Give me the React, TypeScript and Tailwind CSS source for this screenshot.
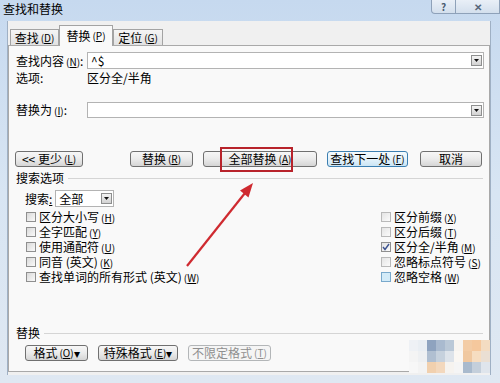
import type { ReactNode } from "react";

const Mn = ({ k }: { k: string }) => (
  <span className="ml-[2px] text-[10px]">
    (<span className="underline">{k}</span>)
  </span>
);

const DropBtn = () => (
  <div className="flex h-[11px] w-[11px] items-center justify-center border border-[#8e8f8f] bg-gradient-to-b from-[#f4f4f4] to-[#d2d2d2]">
    <svg width="5" height="3" viewBox="0 0 5 3">
      <path d="M0 0h5L2.5 3z" fill="#111" />
    </svg>
  </div>
);

type BtnProps = { children: ReactNode; className?: string; primary?: boolean; disabled?: boolean };

const Btn = ({ children, className = "", primary, disabled }: BtnProps) => {
  let skin = "border-[#707070] bg-gradient-to-b from-[#f7f7f7] via-[#ebebeb] to-[#d5d5d5] text-black";
  if (primary) skin = "border-[#3c7fb1] bg-gradient-to-b from-[#f5fbfe] via-[#e5f3fb] to-[#cbe5f5] text-black";
  if (disabled) skin = "border-[#b3b6b8] bg-[#f5f5f5] text-[#8f8f8f]";
  return (
    <div className={`flex h-[16px] items-center justify-center rounded-[3px] border leading-none ${skin} ${className}`}>
      {children}
    </div>
  );
};

type CheckProps = { children: ReactNode; tone?: "dim" | "on" | "hover" };

const Check = ({ children, tone }: CheckProps) => {
  let box = "border-[#8f8f8f] bg-gradient-to-br from-[#d9d9d9] to-[#fafafa]";
  if (tone === "dim") box = "border-[#b9b9b9] bg-gradient-to-br from-[#e4e4e4] to-[#fbfbfb]";
  if (tone === "on") box = "border-[#8f8f8f] bg-gradient-to-br from-[#e2e2e2] to-[#fbfbfb]";
  if (tone === "hover") box = "border-[#79a9cc] bg-[#d3ebf8]";
  return (
    <div className="flex h-[15px] items-center gap-[3px]">
      <div className={`flex h-[10px] w-[10px] items-center justify-center border ${box}`}>
        {tone === "on" && (
          <svg width="8" height="8" viewBox="0 0 8 8">
            <path d="M1 4l2 2.5L7 1" stroke="#3d5390" strokeWidth="1.4" fill="none" />
          </svg>
        )}
      </div>
      <span className="leading-[13px]">{children}</span>
    </div>
  );
};

const mosaic = [
  ["#eef1f5", "#e9eef3", "#8ea3bf", "#a9bacf", "#bac8d7", "#f7f4f0", "#f3cca5", "#f5c89d", "#f3dcc2"],
  ["#f4f4f4", "#eef0f2", "#b0bfd1", "#c6d1dd", "#dde3ea", "#faf7f3", "#f0c8a0", "#f6ddc1", "#eadfd3"],
  ["#f7f7f7", "#f3f3f3", "#f1d0ae", "#f3d8bd", "#f6f3ef", "#f5f5f5", "#a9bacd", "#c4cfdb", "#dfe5ec"],
];

export default function App() {
  return (
    <div className="relative h-[383px] w-[500px] overflow-hidden bg-gradient-to-b from-[#c6d9ef] via-[#d8e5f3] to-[#dfe8f2] font-['Noto_Sans_CJK_SC','Noto_Sans',sans-serif] text-[12px] text-black">
      {/* title bar */}
      <div className="flex h-[21px] items-start justify-between">
        <span className="pl-[3px] pt-[2px] leading-[14px]">查找和替换</span>
        <div className="flex h-[14px]">
          <div className="flex w-[25px] items-center justify-center rounded-bl-[4px] border border-t-0 border-[#8ea1b9] bg-gradient-to-b from-[#e9eff7] to-[#d3dfed] text-[10px] font-bold leading-[12px] text-[#4a5b70]">
            ?
          </div>
          <div className="flex w-[44px] items-center justify-center border border-l-0 border-t-0 border-[#8ea1b9] bg-gradient-to-b from-[#e9eff7] to-[#d3dfed] text-[10px] font-bold leading-[12px] text-[#56667a]">
            ✕
          </div>
        </div>
      </div>

      {/* client */}
      <div className="ml-[7px] h-[354px] w-[484px] border-l border-r border-[#9fb0c4] bg-[#f0f0f0] pt-[4px]">
        {/* tabs */}
        <div className="flex items-end pl-[2px]">
          <div className="flex h-[16px] w-[49px] items-center justify-center border border-b-0 border-[#a3a3a3] bg-gradient-to-b from-[#f5f5f5] to-[#e2e2e2] leading-none">
            查找<Mn k="D" />
          </div>
          <div className="relative z-10 -mb-px flex h-[21px] w-[54px] items-center justify-center border border-b-0 border-[#a3a3a3] bg-[#f9f9f9] leading-none">
            替换<Mn k="P" />
          </div>
          <div className="flex h-[16px] w-[50px] items-center justify-center border border-b-0 border-[#a3a3a3] bg-gradient-to-b from-[#f5f5f5] to-[#e2e2e2] leading-none">
            定位<Mn k="G" />
          </div>
        </div>

        {/* panel */}
        <div className="h-[327px] w-[482px] border border-[#a9a9a9] bg-[#f9f9f9] pl-[7px] pt-[6px]">
          <div className="flex items-center">
            <span className="w-[71px] leading-none">
              查找内容<Mn k="N" />:
            </span>
            <div className="flex h-[17px] w-[397px] items-center justify-between border border-[#b3b3b3] bg-white pl-[3px] pr-[1px] leading-none">
              <span>^$</span>
              <DropBtn />
            </div>
          </div>

          <div className="mt-[3px] flex h-[12px] items-center leading-none">
            <span className="w-[71px]">选项:</span>
            <span>区分全/半角</span>
          </div>

          <div className="mt-[18px] flex items-center">
            <span className="w-[71px] leading-none">
              替换为<Mn k="I" />:
            </span>
            <div className="flex h-[16px] w-[397px] items-center justify-end border border-[#b3b3b3] bg-white pr-[1px]">
              <DropBtn />
            </div>
          </div>

          <div className="-ml-[1px] mt-[33px] flex">
            <Btn className="w-[68px]">
              &lt;&lt; 更少<Mn k="L" />
            </Btn>
            <Btn className="ml-[47px] w-[63px]">
              替换<Mn k="R" />
            </Btn>
            <Btn className="ml-[10px] w-[114px]">
              全部替换<Mn k="A" />
            </Btn>
            <Btn primary className="ml-[10px] w-[81px]">
              查找下一处<Mn k="F" />
            </Btn>
            <Btn className="ml-[12px] w-[62px]">取消</Btn>
          </div>

          <div className="mt-[5px] flex h-[12px] items-center gap-[4px] pr-[6px] leading-none">
            <span>搜索选项</span>
            <div className="h-px flex-1 bg-[#d5d5d5]" />
          </div>

          <div className="ml-[9px] mt-[6px] flex items-center gap-[3px]">
            <span className="leading-none">
              搜索<span className="underline">:</span>
            </span>
            <div className="flex h-[17px] w-[59px] items-center justify-between border border-[#b3b3b3] bg-white pl-[3px] pr-[1px] leading-none">
              <span>全部</span>
              <DropBtn />
            </div>
          </div>

          <div className="ml-[10px] mt-[2px] flex">
            <div className="flex w-[355px] flex-col">
              <Check>
                区分大小写<Mn k="H" />
              </Check>
              <Check>
                全字匹配<Mn k="Y" />
              </Check>
              <Check>
                使用通配符<Mn k="U" />
              </Check>
              <Check>
                同音 (英文)<Mn k="K" />
              </Check>
              <Check>
                查找单词的所有形式 (英文)<Mn k="W" />
              </Check>
            </div>
            <div className="flex flex-col">
              <Check tone="dim">
                区分前缀<Mn k="X" />
              </Check>
              <Check tone="dim">
                区分后缀<Mn k="T" />
              </Check>
              <Check tone="on">
                区分全/半角<Mn k="M" />
              </Check>
              <Check tone="dim">
                忽略标点符号<Mn k="S" />
              </Check>
              <Check tone="hover">
                忽略空格<Mn k="W" />
              </Check>
            </div>
          </div>

          <div className="mt-[43px] flex h-[12px] items-center gap-[4px] pr-[6px] leading-none">
            <span>替换</span>
            <div className="h-px flex-1 bg-[#d5d5d5]" />
          </div>

          <div className="ml-[9px] mt-[6px] flex gap-[10px]">
            <Btn className="w-[63px]">
              格式<Mn k="O" /> ▾
            </Btn>
            <Btn className="w-[80px]">
              特殊格式<Mn k="E" />▾
            </Btn>
            <Btn disabled className="w-[83px]">
              不限定格式<Mn k="T" />
            </Btn>
          </div>
        </div>
      </div>

      {/* red highlight */}
      <div className="absolute left-[220px] top-[147px] h-[25px] w-[73px] border-[2px] border-[#b8232b]" />
      <svg className="absolute left-0 top-0" width="500" height="383" viewBox="0 0 500 383">
        <line x1="187" y1="266" x2="245" y2="193" stroke="#cf2a30" strokeWidth="2.2" />
        <path d="M253 183 L248.5 197.5 L240 190.5 Z" fill="#cf2a30" />
      </svg>

      {/* mosaic watermark */}
      <div className="absolute left-[409px] top-[340px] flex flex-col">
        {mosaic.map((row, i) => (
          <div key={i} className="flex">
            {row.map((c, j) => (
              <div key={j} className="h-[11px] w-[9px]" style={{ backgroundColor: c }} />
            ))}
          </div>
        ))}
      </div>
    </div>
  );
}
